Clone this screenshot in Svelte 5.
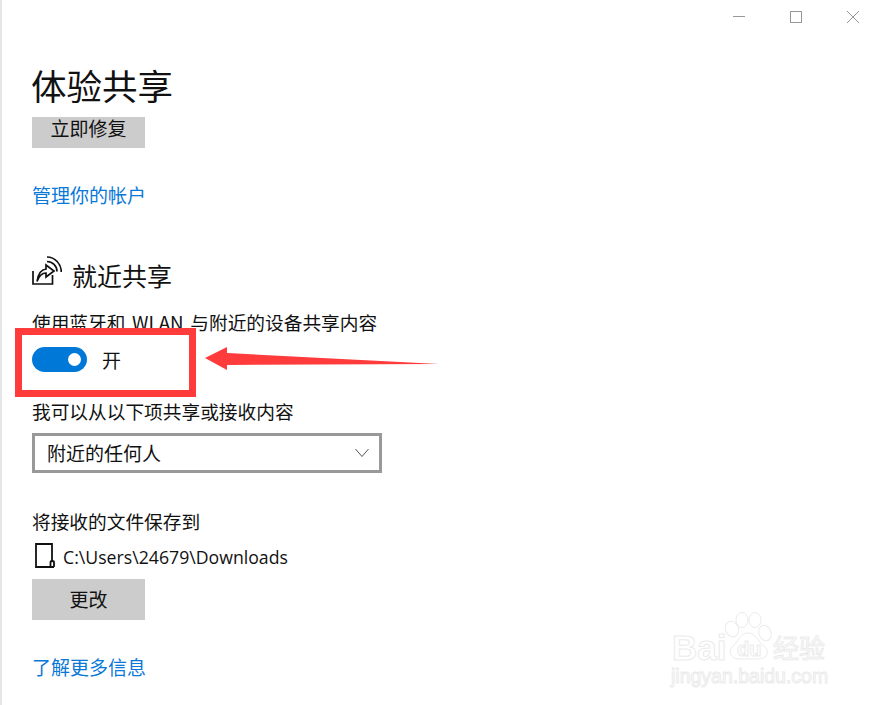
<script>
    // Dados da tela de configurações
    let nearbyOn = $state(true);
    const savePath = "C:\\Users\\24679\\Downloads";
</script>

<div class="window">
    <div class="titlebar">
        <svg viewBox="0 0 12 12" class="ctrl"><path d="M0 5.500H12" /></svg>
        <svg viewBox="0 0 12 12" class="ctrl"><rect x="0.500" y="0.500" width="11" height="11" /></svg>
        <svg viewBox="0 0 12 12" class="ctrl"><path d="M0 0L12 12M12 0L0 12" /></svg>
    </div>

    <main>
        <h1>体验共享</h1>
        <button type="button" class="btn fix"><span>立即修复</span></button>
        <a class="link account" href="#account">管理你的帐户</a>

        <div class="section-head">
            <svg viewBox="0 0 30 30" class="share-icon">
                <path d="M1 15V28H20.500V19" />
                <path d="M5 25.500C6 18.500 9 13.500 14 13V9L22 15L14 21V17C10 17 7 20 5 25.500Z" />
                <path d="M15 5.500C20.500 5.500 25 10 25 15.500" />
                <path d="M15 1C23 1 29.300 8 29.300 16" />
            </svg>
            <h2>就近共享</h2>
        </div>

        <p class="label bluetooth">使用蓝牙和 WLAN 与附近的设备共享内容</p>
        <div class="toggle-row">
            <button type="button" class="toggle" aria-label="开" onclick={() => (nearbyOn = !nearbyOn)}>
                <span class="knob"></span>
            </button>
            <span>{nearbyOn ? "开" : "关"}</span>
        </div>

        <p class="label from">我可以从以下项共享或接收内容</p>
        <div class="select">
            <span>附近的任何人</span>
            <svg viewBox="0 0 14 10"><path d="M0.500 1L7 8.500L13.500 1" /></svg>
        </div>

        <p class="label save">将接收的文件保存到</p>
        <div class="path-row">
            <svg viewBox="0 0 20 25" class="file-icon">
                <path d="M17 19V1H1V24H19" />
                <path d="M15.500 24V19.500C15.500 17.500 19 17.500 19 19.500V24" />
            </svg>
            <span>{savePath}</span>
        </div>
        <button type="button" class="btn change">更改</button>
        <a class="link more" href="#more">了解更多信息</a>
    </main>

    <!-- Marcações feitas por cima da captura -->
    <div class="red-box"></div>
    <svg class="arrow" viewBox="0 0 235 24">
        <polygon points="0,11 22,0 22,6 234,17 22,18 22,23" />
    </svg>

    <div class="watermark">
        <svg viewBox="0 0 48 48" class="paw">
            <ellipse cx="8" cy="17" rx="6.500" ry="8" transform="rotate(-25 8 17)" />
            <ellipse cx="18" cy="8" rx="6" ry="7.500" />
            <ellipse cx="31" cy="8" rx="6" ry="7.500" />
            <ellipse cx="41" cy="21" rx="6" ry="8" transform="rotate(-20 41 21)" />
            <path d="M24 21C16 21 15 29 9 34C3 39 7 47 15 47H34C44 47 46 39 40 34C33 29 32 21 24 21Z" />
        </svg>
        <span class="wm-bai">Bai</span>
        <span class="wm-du">du</span>
        <span class="wm-cn">经验</span>
        <span class="wm-url">jingyan.baidu.com</span>
    </div>
</div>

<style>
    :global(body) {
        margin: 0;
        background: #fff;
    }

    .window {
        position: relative;
        width: 875px;
        height: 705px;
        overflow: hidden;
        box-sizing: border-box;
        border-left: 2px solid #e6e6e6;
        background: #fff;
        color: #111;
        font-family: "Noto Sans CJK SC", "Noto Sans", sans-serif;
        font-size: 19px;
    }

    .titlebar {
        display: flex;
        justify-content: flex-end;
        gap: 45px;
        height: 46px;
        padding: 11px 16px 0 0;
        box-sizing: border-box;
    }

    .ctrl {
        width: 12px;
        height: 12px;
        fill: none;
        stroke: #999;
        stroke-width: 1;
    }

    main {
        display: flex;
        flex-direction: column;
        align-items: flex-start;
        padding-left: 30px;
    }

    h1 {
        margin: 16px 0 0 -1px;
        height: 55px;
        line-height: 46px;
        font-size: 35.500px;
        font-weight: 400;
    }

    .btn {
        width: 113px;
        padding: 0;
        border: none;
        background: #ccc;
        color: #111;
        font: inherit;
        font-size: 19px;
    }

    .fix {
        height: 31px;
        line-height: 22px;
        padding-bottom: 9px;
    }

    .fix span {
        display: block;
    }

    .link {
        color: #0a78d7;
        text-decoration: none;
        line-height: 28px;
        font-size: 19px;
    }

    .account {
        margin-top: 33px;
    }

    .section-head {
        display: flex;
        align-items: center;
        gap: 10px;
        margin-top: 47px;
        height: 30px;
    }

    .share-icon {
        width: 30px;
        height: 30px;
        fill: none;
        stroke: #111;
        stroke-width: 1.700;
    }

    h2 {
        margin: 8px 0 0;
        font-size: 25px;
        font-weight: 400;
        line-height: 36px;
    }

    .label {
        margin: 0;
        line-height: 28px;
        font-size: 18.7px;
    }

    .bluetooth {
        margin-top: 22px;
        word-spacing: 2.500px;
    }

    .toggle-row {
        display: flex;
        align-items: center;
        gap: 15px;
        margin-top: 11px;
        height: 25px;
    }

    .toggle {
        display: flex;
        align-items: center;
        justify-content: flex-end;
        width: 55px;
        height: 25px;
        padding: 0 6px;
        border: none;
        border-radius: 13px;
        background: #0078d7;
    }

    .knob {
        width: 13px;
        height: 13px;
        border-radius: 50%;
        background: #fff;
    }

    .from {
        margin-top: 25px;
    }

    .select {
        display: flex;
        align-items: center;
        justify-content: space-between;
        box-sizing: border-box;
        width: 350px;
        height: 40px;
        margin-top: 8px;
        padding: 0 10px 0 12px;
        border: 3px solid #999;
    }

    .select span {
        margin-top: -2px;
    }

    .select svg {
        width: 14px;
        height: 10px;
        fill: none;
        stroke: #555;
        stroke-width: 1;
    }

    .save {
        margin-top: 34px;
    }

    .path-row {
        display: flex;
        align-items: center;
        gap: 8px;
        height: 25px;
        margin-top: 8px;
        padding-left: 3px;
        font-family: "Open Sans", "Noto Sans CJK SC", sans-serif;
        font-size: 17.700px;
    }

    .path-row span {
        margin-top: 3px;
    }

    .file-icon {
        width: 20px;
        height: 25px;
        fill: none;
        stroke: #111;
        stroke-width: 1.800;
    }

    .change {
        height: 41px;
        margin-top: 11px;
        padding-bottom: 2px;
    }

    .more {
        margin-top: 33px;
    }

    .red-box {
        position: absolute;
        left: 13px;
        top: 328px;
        width: 181px;
        height: 69px;
        box-sizing: border-box;
        border: 7px solid #ff3b3b;
    }

    .arrow {
        position: absolute;
        left: 203px;
        top: 347px;
        width: 235px;
        height: 24px;
        fill: #ff3b3b;
    }

    .watermark {
        position: absolute;
        left: 0;
        top: 0;
        width: 100%;
        height: 100%;
        pointer-events: none;
        color: #fff;
        font-family: "Liberation Sans", sans-serif;
    }

    .watermark span {
        position: absolute;
        -webkit-text-stroke: 1px #ebebeb;
        line-height: 1;
    }

    .paw {
        position: absolute;
        left: 722px;
        top: 612px;
        width: 48px;
        height: 48px;
        fill: #fff;
        stroke: #ebebeb;
        stroke-width: 1;
    }

    .wm-bai {
        left: 670px;
        top: 630px;
        font-size: 35px;
        font-weight: 700;
    }

    .wm-du {
        left: 735px;
        top: 639px;
        font-size: 20px;
        font-weight: 700;
    }

    .wm-cn {
        left: 771px;
        top: 634px;
        font-family: "Noto Sans CJK SC", sans-serif;
        font-size: 26px;
    }

    .wm-url {
        left: 669px;
        top: 667px;
        font-size: 19.500px;
    }
</style>
